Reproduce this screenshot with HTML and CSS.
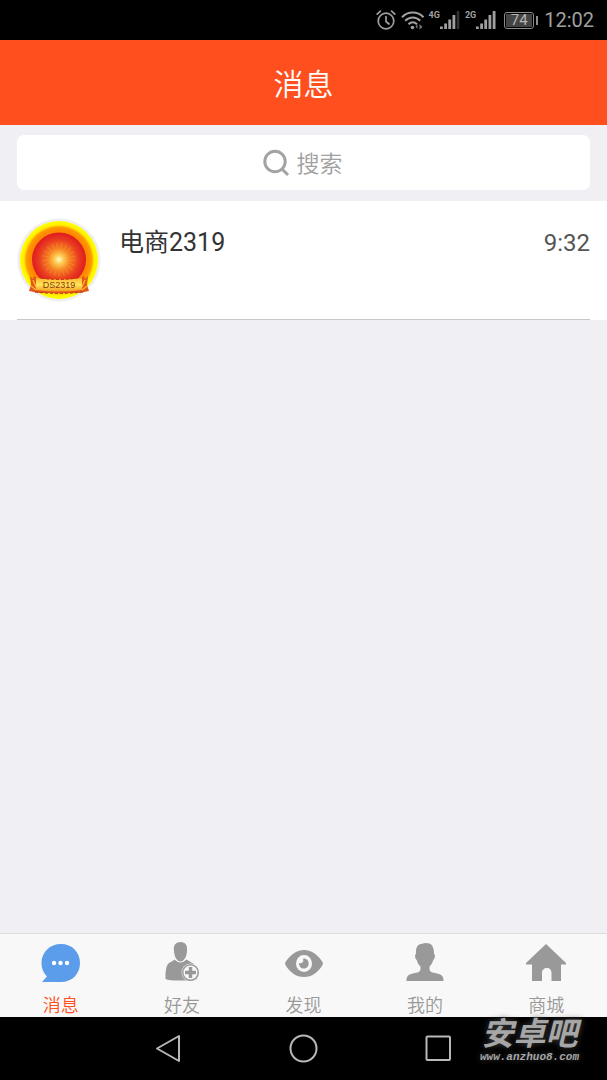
FILE: index.html
```html
<!DOCTYPE html>
<html lang="zh-CN">
<head>
<meta charset="utf-8">
<meta name="viewport" content="width=device-width, initial-scale=1">
<title>消息</title>
<link rel="stylesheet" href="styles.css">
</head>
<body>
<div class="status">
  <svg width="20" height="22" viewBox="0 0 20 22" fill="none" stroke="currentColor" stroke-width="1.7" stroke-linecap="round"><circle cx="10" cy="12" r="7.8"/><path d="M10 7.5v5l3 2.5M1.2 5.2l3.2-3M18.8 5.2l-3.2-3"/></svg>
  <svg width="23" height="22" viewBox="0 0 23 22" fill="none" stroke="currentColor" stroke-width="2.1"><path d="M1 8.2c6-6.2 15.500-6.200 21.500 0M4.200 11.800c4.300-4.400 10.800-4.400 15 0M7.500 15.200c2.500-2.500 6-2.500 8.500 0"/><circle cx="11.500" cy="18.500" r="1.800" fill="currentColor" stroke="none"/><path stroke="none" fill="#777" d="M16.500 15v5l-2-2.500zM18.500 15l3 3-3 2.500z"/></svg>
  <span class="signal"><span class="network">4G</span><svg width="20" height="20" viewBox="0 0 20 20" fill="currentColor"><path d="M0 16.500h2.800V19H0zM4.200 13.500H7V19H4.200zM8.300 9.500h2.800V19H8.300zM12.500 5h2.800v14h-2.800z"/><path fill="#333" d="M16.700 1h2.600v18h-2.600z"/></svg></span>
  <span class="signal"><span class="network">2G</span><svg width="20" height="20" viewBox="0 0 20 20" fill="currentColor"><path d="M0 16.500h2.800V19H0zM4.200 13.500H7V19H4.200zM8.300 9.500h2.800V19H8.300zM12.500 5h2.800v14h-2.800zM16.700 1h2.800v18h-2.800z"/></svg></span>
  <span class="battery"><span class="charge">74</span></span>
  <span class="clock">12:02</span>
</div>
<header class="header"><h1 class="title">消息</h1></header>
<main class="main">
  <div class="search">
    <label class="search-box">
      <svg width="28" height="28" viewBox="0 0 28 28" fill="none" stroke="currentColor" stroke-width="3"><circle cx="12" cy="12.500" r="10.200"/><path d="M19 20l6 6"/></svg>
      <input class="search-input" type="text" placeholder="搜索" aria-label="搜索">
    </label>
  </div>
  <div class="chats">
    <article class="chat">
      <svg class="avatar" viewBox="0 0 84 84">
        <defs>
          <radialGradient id="halo"><stop offset=".76" stop-color="#ff8a00"/><stop offset=".84" stop-color="#ff9c00"/><stop offset=".9" stop-color="#fff000"/><stop offset="1" stop-color="#ffff00"/></radialGradient>
          <radialGradient id="sun"><stop offset="0" stop-color="#fffbd0"/><stop offset=".16" stop-color="#ffcf55"/><stop offset=".4" stop-color="#f58220"/><stop offset=".75" stop-color="#e93a20"/><stop offset="1" stop-color="#df1b20"/></radialGradient>
          <linearGradient id="ribbon" x2="0" y2="1"><stop offset="0" stop-color="#ffb52e"/><stop offset=".5" stop-color="#ffe65a"/><stop offset="1" stop-color="#f79a1e"/></linearGradient>
        </defs>
        <circle cx="42" cy="42" r="41.500" fill="#eeeef0"/>
        <circle cx="42" cy="42" r="39" fill="url(#halo)"/>
        <circle cx="42" cy="41.500" r="27" fill="url(#sun)"/>
        <circle cx="42" cy="41.500" r="10" fill="none" stroke="#ffc44d" stroke-opacity=".2" stroke-width="14" stroke-dasharray="1 2"/>
        <path fill="#e2551c" d="M13 58l3 3 1-3 4 3h42l4-3 1 3 3-3-1 9 2 6-10 2H22l-10-2 2-6z"/>
        <path fill="none" stroke="#ffb32c" stroke-width="1.500" d="M16 62l3 7M14 68l5 4M68 62l-3 7M70 68l-5 4"/>
        <path fill="url(#ribbon)" d="M19 60q23 3 46 0v12q-23 3-46 0z"/>
        <path fill="none" stroke="#b83a12" stroke-width="1" stroke-dasharray="3 2" d="M18 74q24 3 48 0M24 60q18 3 36 0"/>
        <text class="avatar-text" x="42" y="70" text-anchor="middle">DS2319</text>
      </svg>
      <h2 class="chat-name">电商2319</h2>
      <time class="chat-time">9:32</time>
    </article>
  </div>
</main>
<nav class="tabs">
  <a class="tab tab-active" href="#messages">
    <svg width="40" height="40" viewBox="0 0 40 40"><path fill="#5b9ceb" d="M20 1c11 0 19 8 19 19s-8 19-19 19H1l5-5.500C2.500 30 .5 25.500.5 20 .5 9 9 1 20 1z"/><g fill="#fff"><circle cx="13" cy="20" r="2.200"/><circle cx="19.500" cy="20" r="2.200"/><circle cx="26" cy="20" r="2.200"/></g></svg>
    <span>消息</span>
  </a>
  <a class="tab" href="#friends">
    <svg width="40" height="40" viewBox="0 0 40 40"><path fill="currentColor" d="M18.500-1c5 0 7 3.500 6.500 8.500 0 5-2.500 11-6.500 11S12 12.500 12 7.500C11 3 13.500-1 18.500-1zM12.500 16.500c4 4 8 4 12 0l4.500 2.800c4 1.500 5 4.700 5.500 9.700l.5 7.500-7.500 1H16c-6 0-10-.5-12.500-1.500C3.500 28 4 23 6.500 20.500c1.500-1.500 4-2 6-4z"/><circle cx="28.500" cy="29.500" r="9" fill="#f8f8f8"/><circle cx="28.500" cy="29.500" r="7.800" fill="none" stroke="currentColor" stroke-width="1.500"/><path fill="none" stroke="currentColor" stroke-width="3.500" d="M28.500 24v11M23 29.500h11"/></svg>
    <span>好友</span>
  </a>
  <a class="tab" href="#discover">
    <svg width="40" height="40" viewBox="0 0 40 40"><path fill="currentColor" d="M1.500 19C6.500 12 12 7 20 7s14 5 18.500 12q1 1.500 0 3C34 29.500 28 34 20 34S6 29.500 1.500 22q-1-1.500 0-3z"/><ellipse cx="20" cy="20.500" rx="8" ry="8.500" fill="#f8f8f8"/><path fill="currentColor" d="M19 15.500c1 3-.5 5.500-4 4.500 0 3.500 2 5.500 4.700 5.500s5-2 5-5-2.200-5.500-5.700-5z"/></svg>
    <span>发现</span>
  </a>
  <a class="tab" href="#me">
    <svg width="40" height="40" viewBox="0 0 40 40"><path fill="currentColor" d="M20.500 0c6 0 8.500 3 8.500 11 1.500 0 1 5-.8 6-.7 3-2 5-3.700 6.500v2c0 3 2 4 5.500 4.500 6 1 8.500 2.500 8.500 8H1.500c0-5.500 2.500-7 8.500-8 3.500-.5 5.500-1.500 5.500-4.500v-2C13.700 22 12.500 20 11.800 17c-1.800-1-2.300-6-.8-6-.5-7 2-9.500 5-10z"/></svg>
    <span>我的</span>
  </a>
  <a class="tab" href="#mall">
    <svg width="40" height="40" viewBox="0 0 40 40"><path fill="currentColor" d="M20 1l20 19v1.500h-5V38h-9.500V30c0-3-1.500-5-4.500-5s-5 2-5 5v8H6V21.500H0V20z"/></svg>
    <span>商城</span>
  </a>
</nav>
<footer class="system">
  <button class="key" type="button" aria-label="返回"><svg width="30" height="30" viewBox="0 0 30 30" fill="none" stroke="currentColor" stroke-width="2" stroke-linejoin="round"><path d="M3 14.500L25 2v25z"/></svg></button>
  <button class="key" type="button" aria-label="主页"><svg width="30" height="30" viewBox="0 0 30 30" fill="none" stroke="currentColor" stroke-width="2"><circle cx="14.500" cy="14.500" r="13"/></svg></button>
  <button class="key" type="button" aria-label="最近任务"><svg width="30" height="30" viewBox="0 0 30 30" fill="none" stroke="currentColor" stroke-width="2"><rect x="2.500" y="2.500" width="23.500" height="23.500" rx="1"/></svg></button>
  <div class="brand"><span class="brand-name">安卓吧</span><span class="brand-url">www.anzhuo8.com</span></div>
</footer>
</body>
</html>
```
FILE: styles.css
```css
* { box-sizing: border-box; }

body {
  margin: 0;
  min-height: 100vh;
  display: flex;
  flex-direction: column;
  background: #efeff4;
  font-family: Roboto, "Noto Sans CJK SC", sans-serif;
}

svg { flex: none; overflow: visible; }

.status {
  display: flex;
  align-items: center;
  justify-content: flex-end;
  gap: 5px;
  height: 40px;
  padding-right: 13px;
  background: #000;
  color: #a0a0a0;
}

.signal { display: flex; align-items: center; }

.network {
  align-self: flex-start;
  font: bold 9px/10px Roboto, sans-serif;
}

.battery {
  position: relative;
  padding: 1px;
  border: 1px solid #8c8c8c;
  border-radius: 3px;
  margin: 0 5px 0 3px;
}

.battery::after {
  content: "";
  position: absolute;
  right: -5px;
  top: 3px;
  width: 2px;
  height: 9px;
  background: #8c8c8c;
}

.charge {
  display: block;
  width: 26px;
  background: #444;
  font-size: 15px;
  line-height: 13px;
  text-align: center;
  color: #b4b4b4;
}

.clock { font-size: 20px; line-height: 24px; }

.header {
  display: flex;
  align-items: center;
  justify-content: center;
  height: 85px;
  padding-top: 4px;
  background: #ff4f1e;
  color: #fff;
}

.title {
  margin: 0;
  font-size: 30px;
  font-weight: 350;
  line-height: 40px;
}

.main { flex: 1; }

.search { padding: 10px 17px 11px; }

.search-box {
  display: flex;
  align-items: center;
  justify-content: center;
  gap: 6px;
  height: 55px;
  border-radius: 7px;
  background: #fff;
  color: #a3a3a3;
}

.search-input {
  width: 48px;
  padding: 4px 0 0;
  border: 0;
  outline: 0;
  background: none;
  color: #333;
  font: 350 23px/32px Roboto, "Noto Sans CJK SC", sans-serif;
}

.search-input::placeholder { color: #a0a0a0; opacity: 1; }

.chats { padding: 0 17px; background: #fff; }

.chat {
  display: flex;
  gap: 18px;
  padding: 17px 0;
  border-bottom: 1px solid #c8c8cc;
}

.avatar { width: 84px; height: 84px; }

.avatar-text {
  font: 9px "Liberation Sans", sans-serif;
  fill: #8c3a0a;
}

.chat-name {
  flex: 1;
  margin: 9px 0 0;
  font-size: 25px;
  font-weight: 400;
  line-height: 32px;
  color: #333;
}

.chat-time {
  margin-top: 9px;
  font-size: 24px;
  line-height: 32px;
  color: #555;
}

.tabs {
  display: flex;
  border-top: 1px solid #dcdce0;
  background: #f8f8f8;
}

.tab {
  flex: 1;
  display: flex;
  flex-direction: column;
  align-items: center;
  gap: 12px;
  padding-top: 9px;
  color: #999;
  font-size: 18px;
  font-weight: 350;
  line-height: 22px;
  text-decoration: none;
}

.tab-active { color: #ff4f1e; }

.system {
  position: relative;
  display: flex;
  align-items: center;
  justify-content: center;
  gap: 105px;
  height: 63px;
  background: #000;
}

.key {
  display: flex;
  padding: 0;
  border: 0;
  background: none;
  color: #b8b8b8;
}

.brand {
  position: absolute;
  right: 28px;
  top: 0;
  display: flex;
  flex-direction: column;
  align-items: center;
  color: #a6a6a6;
  font-weight: 700;
  font-style: italic;
  text-shadow: 0 0 6px #444;
}

.brand-name { font-size: 32px; line-height: 35px; }

.brand-url { font: italic bold 11px/11px "Liberation Mono", monospace; }
```
